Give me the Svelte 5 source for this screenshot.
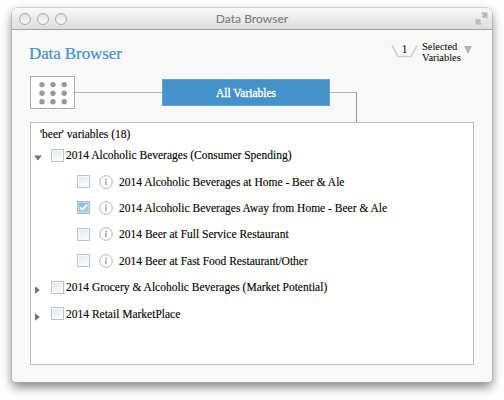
<script>
  const groups = [
    {
      label: '2014 Alcoholic Beverages (Consumer Spending)', open: true,
      items: [
        { label: '2014 Alcoholic Beverages at Home - Beer & Ale' },
        { label: '2014 Alcoholic Beverages Away from Home - Beer & Ale', checked: true },
        { label: '2014 Beer at Full Service Restaurant' },
        { label: '2014 Beer at Fast Food Restaurant/Other' }
      ]
    },
    { label: '2014 Grocery & Alcoholic Beverages (Market Potential)', items: [] },
    { label: '2014 Retail MarketPlace', items: [] }
  ];
</script>

{#snippet check(on)}
  <span class="check" class:on>
    {#if on}
      <svg width="11" height="11" viewBox="0 0 11 11"><path d="M2 5.2 L4.4 7.6 L9 2.6" fill="none" stroke="#fff" stroke-width="1.9" /></svg>
    {/if}
  </span>
{/snippet}

<div class="desktop">
<div class="window">
  <header class="titlebar">
    <div class="lights"><i></i><i></i><i></i></div>
    <span class="title">Data Browser</span>
    <svg class="expand" width="13" height="13" viewBox="0 0 13 13" fill="#b8b8b8">
      <path d="M6.5 .5 H12.5 V6.5 H10.8 V4.4 L8.8 6.2 L6.8 4.2 L8.8 2.2 H6.5Z" />
      <path d="M.5 6.5 H2.2 V8.6 L4.2 6.8 L6.2 8.8 L4.2 10.8 H6.5 V12.5 H.5Z" />
    </svg>
  </header>
  <main>
    <div class="head">
      <h1>Data Browser</h1>
      <div class="selected">
        <div class="tray">
          <svg width="27" height="13" viewBox="0 0 27 13"><path d="M1 .5 L7 11.5 H20 L26 .5" fill="none" stroke="#d2d2d2" stroke-width="1.7" /></svg>
          <b>1</b>
        </div>
        <div class="sel-label">Selected<br />Variables</div>
        <svg class="down" width="8" height="8" viewBox="0 0 8 8"><path d="M0 0H8L4 8Z" fill="#b3b3b3" /></svg>
      </div>
    </div>
    <div class="nav">
      <div class="gridbox">
        <svg width="30" height="24" viewBox="0 0 30 24" fill="#999">
          {#each [3.6, 12.2, 20.8] as y}{#each [4, 15, 26.2] as x}<circle cx={x} cy={y} r="2.7" />{/each}{/each}
        </svg>
      </div>
      <div class="line"></div>
      <div class="tab">All Variables</div>
      <div class="elbow"></div>
    </div>
    <section class="panel">
      <div class="summary">'beer' variables (18)</div>
      {#each groups as g}
        <div class="row">
          <svg class="arrow" width="8" height="8" viewBox="0 0 8 8">
            <path d={g.open ? 'M.2 1.5H7.8L4 6.5Z' : 'M1 0.2V7.8L5.8 4Z'} fill="#707070" />
          </svg>
          {@render check(false)}
          <span class="label">{g.label}</span>
        </div>
        {#each g.items as item}
          <div class="row child">
            {@render check(item.checked)}
            <svg class="info" width="14" height="14" viewBox="0 0 14 14">
              <circle cx="7" cy="7" r="6.3" fill="#fff" stroke="#b5b5b5" />
              <path d="M7 3.4v1.5M7 5.7v4.5" stroke="#999" stroke-width="1.4" />
            </svg>
            <span class="label">{item.label}</span>
          </div>
        {/each}
      {/each}
    </section>
  </main>
</div>
</div>

<style>
  :global(body) { margin: 0; background: #fff; }
  .desktop { height: 400px; display: flow-root; overflow: hidden; }
  .window {
    width: 480px; height: 374px; margin: 8px 0 0 12px; box-sizing: border-box;
    border-radius: 5px 5px 4px 4px; background: #f8f8f8;
    box-shadow: 0 0 0 .6px #b4b4b4, 0 5px 11px rgba(0,0,0,.5);
    display: flow-root; font-family: "Liberation Serif", "Times New Roman", serif; color: #000;
  }
  .titlebar {
    height: 22px; box-sizing: border-box; border-bottom: 1px solid #a4a4a4; border-radius: 5px 5px 0 0;
    background: linear-gradient(#f8f8f8, #dedede); display: grid; grid-template-columns: 60px 1fr 60px; align-items: center;
  }
  .lights { display: flex; gap: 6px; padding-left: 7px; }
  .lights i { width: 12px; height: 12px; box-sizing: border-box; border: 1px solid #aaa; border-radius: 50%; background: linear-gradient(#e2e2e2, #f8f8f8); }
  .title { font: 12px/20px "Lato", sans-serif; letter-spacing: .05px; color: #808080; text-align: center; -webkit-text-stroke: .15px; }
  .expand { justify-self: end; margin-right: 4px; }
  main { padding: 0 18px; }
  .head { height: 46px; display: flex; justify-content: space-between; }
  h1 { margin: 14px 0 0 -1px; font-size: 17px; line-height: 20px; font-weight: 400; letter-spacing: -.1px; color: #4191cc; -webkit-text-stroke: .2px #4191cc; }
  .selected { display: flex; padding: 11px 2px 0 0; }
  .tray { width: 27px; height: 13px; margin-top: 4px; display: grid; }
  .tray > * { grid-area: 1 / 1; }
  .tray b { font-size: 11.5px; line-height: 9px; font-weight: 400; text-align: center; }
  .sel-label { font-size: 10.5px; line-height: 11px; margin-left: 4px; width: 42px; letter-spacing: -.04px; }
  .down { margin-top: 5px; }
  .nav { display: flex; height: 46px; }
  .gridbox { width: 45px; height: 33px; box-sizing: border-box; border: 1px solid #aaa; background: #fff; display: flex; align-items: center; justify-content: center; }
  .line { width: 87px; height: 1px; margin-top: 16px; background: #b5b5b5; }
  .tab { width: 168px; height: 27px; margin-top: 3px; box-sizing: border-box; border: 1px solid #5fa5d8; background: #4492cb; color: #fff; font-size: 11.5px; line-height: 26px; text-align: center; -webkit-text-stroke: .3px; }
  .elbow { width: 27px; height: 30px; margin-top: 16px; box-sizing: border-box; border-top: 1px solid #b5b5b5; border-right: 1px solid #999; }
  .panel { height: 243px; box-sizing: border-box; border: 1px solid #bcbcbc; background: #fff; font-size: 11.5px; white-space: nowrap; -webkit-text-stroke: .12px; }
  .summary { height: 19px; line-height: 23px; padding-left: 9px; }
  .row { height: 26.4px; display: flex; align-items: center; padding-left: 3px; }
  .child { padding-left: 46px; }
  .arrow { margin: 6px 9px 0 0; }
  .check { width: 13px; height: 13px; box-sizing: border-box; border: 1px solid #bcc5ce; background: linear-gradient(160deg, #d9e7f0, #fafdff 90%); box-shadow: inset 0 0 0 1px #f4f8fa; flex: none; }
  .check svg { display: block; }
  .on { background: linear-gradient(160deg, #7fb6d9, #a9d3ec); box-shadow: inset 0 0 0 1px #c3dfef; border-color: #a9bac8; }
  .label { margin-left: 2px; }
  .info { margin-left: 9px; }
  .child .label { margin-left: 6px; }
</style>
